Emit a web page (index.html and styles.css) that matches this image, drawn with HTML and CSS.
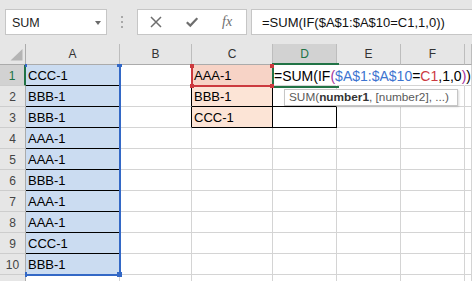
FILE: index.html
```html
<!DOCTYPE html>
<html lang="en">
<head>
  <meta charset="UTF-8" />
  <title>SUM IF</title>
  <link rel="stylesheet" href="styles.css">
</head>
<body>
  <div class="bar">
    <div class="namebox"><span>SUM</span><span class="caret"></span></div>
    <div class="grip"><i></i><i></i><i></i></div>
    <div class="fnbox">
      <svg class="ico" width="12" height="12" viewBox="0 0 12 12"><path d="M1 1L11 11M11 1L1 11" stroke="#6e6e6e" stroke-width="1.5" fill="none"/></svg>
      <svg class="ico ok" width="12" height="12" viewBox="0 0 12 12"><path d="M0.8 6.2L4.3 9.6L11.3 2.2" stroke="#6e6e6e" stroke-width="2.2" fill="none"/></svg>
      <span class="fx">fx</span>
    </div>
    <div class="formula">=SUM(IF($A$1:$A$10=C1,1,0))</div>
  </div>

  <div class="sheet">
    <div class="c hd corner"><svg width="26" height="20" viewBox="0 0 26 20"><polygon points="22.5,5 22.5,16.5 10.5,16.5" fill="#b4b4b4"/></svg></div>
    <div class="c hd">A</div>
    <div class="c hd">B</div>
    <div class="c hd">C</div>
    <div class="c hd sel">D</div>
    <div class="c hd">E</div>
    <div class="c hd">F</div>
    <div class="c hd"></div>

    <div class="c rh sel">1</div>
    <div class="c a">CCC-1</div>
    <div class="c br"></div>
    <div class="c pk pk1">AAA-1</div>
    <div class="c edit">=SUM<span class="p">(</span>IF<span class="p2">(</span><span class="ref-a">$A$1:$A$10</span>=<span class="ref-c">C1</span>,1,0<span class="p2">)</span><span class="p">)</span></div>
    <div class="c ov"></div>
    <div class="c ov"></div>
    <div class="c"></div>

    <div class="c rh">2</div>
    <div class="c a">BBB-1</div>
    <div class="c br"></div>
    <div class="c pk">BBB-1</div>
    <div class="c bt"></div>
    <div class="c"></div>
    <div class="c"></div>
    <div class="c"></div>

    <div class="c rh">3</div>
    <div class="c a">BBB-1</div>
    <div class="c br"></div>
    <div class="c pk">CCC-1</div>
    <div class="c bx"></div>
    <div class="c"></div>
    <div class="c"></div>
    <div class="c"></div>

    <div class="c rh">4</div>
    <div class="c a">AAA-1</div>
    <div class="c"></div><div class="c"></div><div class="c"></div><div class="c"></div><div class="c"></div><div class="c"></div>

    <div class="c rh">5</div>
    <div class="c a">AAA-1</div>
    <div class="c"></div><div class="c"></div><div class="c"></div><div class="c"></div><div class="c"></div><div class="c"></div>

    <div class="c rh">6</div>
    <div class="c a">BBB-1</div>
    <div class="c"></div><div class="c"></div><div class="c"></div><div class="c"></div><div class="c"></div><div class="c"></div>

    <div class="c rh">7</div>
    <div class="c a">AAA-1</div>
    <div class="c"></div><div class="c"></div><div class="c"></div><div class="c"></div><div class="c"></div><div class="c"></div>

    <div class="c rh">8</div>
    <div class="c a">AAA-1</div>
    <div class="c"></div><div class="c"></div><div class="c"></div><div class="c"></div><div class="c"></div><div class="c"></div>

    <div class="c rh">9</div>
    <div class="c a">CCC-1</div>
    <div class="c"></div><div class="c"></div><div class="c"></div><div class="c"></div><div class="c"></div><div class="c"></div>

    <div class="c rh">10</div>
    <div class="c a">BBB-1</div>
    <div class="c"></div><div class="c"></div><div class="c"></div><div class="c"></div><div class="c"></div><div class="c"></div>

    <div class="c rh"></div>
    <div class="c"></div><div class="c"></div><div class="c"></div><div class="c"></div><div class="c"></div><div class="c"></div><div class="c"></div>

    <!-- range finder frames over the grid -->
    <div class="frame frame-a"></div>
    <div class="knob blue" style="left:25px; top:20px; width:2px; height:3px"></div>
    <div class="knob blue" style="left:117px; top:20px; width:5px; height:3px"></div>
    <div class="knob blue" style="left:25px; top:228px; width:2px; height:5px"></div>
    <div class="knob blue" style="left:117px; top:228px; width:5px; height:5px"></div>

    <div class="frame frame-c"></div>
    <div class="knob red" style="left:190px; top:20px"></div>
    <div class="knob red" style="left:270px; top:20px"></div>
    <div class="knob red" style="left:190px; top:40px"></div>
    <div class="knob red" style="left:270px; top:40px"></div>

    <div class="frame active"></div>

    <div class="tip">SUM(<b>number1</b>, [number2], ...)</div>
  </div>
</body>
</html>
```

FILE: styles.css
```css
* {
  box-sizing: border-box;
}
body {
  margin: 0;
  font-family: "Liberation Sans", Arial, sans-serif;
  background: #fff;
  overflow: hidden;
}

/* formula bar */
.bar {
  height: 44px;
  background: #e6e6e6;
  display: flex;
  align-items: flex-start;
  padding-top: 9px;
}
.namebox {
  margin-left: 5px;
  width: 102px;
  height: 26px;
  background: #fff;
  border: 1px solid #c6c6c6;
  display: flex;
  align-items: center;
  justify-content: space-between;
  padding: 1px 5px 0 6px;
  font-size: 12.5px;
  color: #222;
}
.caret {
  width: 0;
  height: 0;
  border-left: 3.5px solid transparent;
  border-right: 3.5px solid transparent;
  border-top: 4px solid #6a6a6a;
}
.grip {
  margin-left: 14px;
  display: flex;
  flex-direction: column;
  gap: 3px;
  padding-top: 7px;
}
.grip i {
  width: 2px;
  height: 2px;
  background: #a8a8a8;
}
.fnbox {
  margin-left: 14px;
  width: 110px;
  height: 26px;
  background: #fff;
  border: 1px solid #c6c6c6;
  display: flex;
  align-items: center;
  padding-left: 12px;
}
.ok {
  margin-left: 24px;
}
.fx {
  margin-left: 24px;
  font-family: "Liberation Serif", serif;
  font-style: italic;
  font-size: 14px;
  color: #6e6e6e;
}
.formula {
  margin-left: 4px;
  flex: 1;
  height: 26px;
  background: #fff;
  border: 1px solid #c6c6c6;
  border-right: none;
  padding-left: 10px;
  font-size: 13px;
  line-height: 25px;
  color: #111;
  white-space: nowrap;
}

/* grid */
.sheet {
  position: relative;
  display: grid;
  grid-template-columns: 26px 94px 72px 81px 64px 64px 64px 1fr;
  grid-auto-rows: 21px;
  height: 237px;
  overflow: hidden;
}
.c {
  border-right: 1px solid #d4d4d4;
  border-bottom: 1px solid #d4d4d4;
  font-size: 13px;
  line-height: 22px;
  padding-left: 2px;
  white-space: nowrap;
  color: #000;
}
.hd {
  background: #e6e6e6;
  border-right-color: #bdbdbd;
  border-bottom-color: #ababab;
  text-align: center;
  font-size: 12px;
  line-height: 21px;
  padding: 0;
  color: #333;
}
.hd.sel {
  background: #d2d2d2;
  border-bottom: 2px solid #217346;
  color: #217346;
}
.corner {
  border-right-color: #ababab;
}
.corner svg {
  display: block;
}
.rh {
  background: #e6e6e6;
  border-right-color: #ababab;
  border-bottom-color: #cdcdcd;
  text-align: center;
  font-size: 12px;
  padding: 0;
  color: #444;
}
.rh.sel {
  background: #d2d2d2;
  border-right: 2px solid #217346;
  color: #217346;
}
.a {
  background: #cbdcf1;
  border-bottom-color: #000;
}
.br {
  border-right-color: #000;
}
.pk {
  background: #fce4d6;
  border-right-color: #000;
  border-bottom-color: #000;
}
.pk1 {
  background: #f7d3c6;
}
.bt {
  border-bottom-color: #000;
}
.bx {
  border-right-color: #000;
  border-bottom-color: #000;
}
.ov {
  border-right-color: transparent;
}
.edit {
  position: relative;
  z-index: 2;
  border-right-color: transparent;
  font-size: 14px;
  padding-left: 1px;
  overflow: visible;
}
.ref-a {
  color: #3d74d0;
}
.ref-c {
  color: #cc3a3f;
}
.p2 {
  color: #a3309b;
}

/* range finder and active cell */
.frame {
  position: absolute;
  z-index: 3;
}
.frame-a {
  left: 25px;
  top: 20px;
  width: 96px;
  height: 212px;
  border-right: 2px solid #3368c6;
  border-bottom: 2px solid #3368c6;
}
.frame-c {
  left: 191px;
  top: 20px;
  width: 83px;
  height: 23px;
  border: 2px solid #cc3a3f;
  border-top: none;
}
.active {
  left: 272px;
  top: 19px;
  width: 67px;
  height: 25px;
  border: 2px solid #217346;
  border-right: none;
}
.knob {
  position: absolute;
  z-index: 4;
  width: 4px;
  height: 4px;
}
.knob.blue {
  background: #3368c6;
}
.knob.red {
  background: #cc3a3f;
}
.tip {
  position: absolute;
  z-index: 5;
  left: 284px;
  top: 45px;
  width: 174px;
  height: 17px;
  background: #fff;
  border: 1px solid #c6c6c6;
  box-shadow: 1px 1px 2px rgba(0, 0, 0, 0.15);
  padding-left: 4px;
  font-size: 11.8px;
  line-height: 15px;
  color: #5a5a5a;
  white-space: nowrap;
}
.tip b {
  color: #333;
}
```
